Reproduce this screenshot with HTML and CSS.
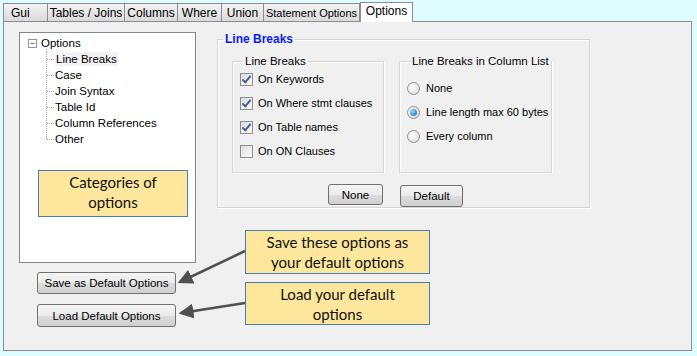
FILE: index.html
```html
<!DOCTYPE html>
<html>
  <head>
    <title>Options</title>
    <link rel="stylesheet" href="styles.css">
  </head>
  <body>
    <div class="tabs">
      <div class="tab t-gui">Gui</div>
      <div class="tab t-tables">Tables / Joins</div>
      <div class="tab t-columns">Columns</div>
      <div class="tab t-where">Where</div>
      <div class="tab t-union">Union</div>
      <div class="tab t-stmt">Statement Options</div>
      <div class="tab active">Options</div>
    </div>
    <div class="panel">
      <div class="left">
        <div class="tree">
          <div class="root"><span class="toggle">&minus;</span>Options</div>
          <ul class="children">
            <li><span class="sel">Line Breaks</span></li>
            <li>Case</li>
            <li>Join Syntax</li>
            <li>Table Id</li>
            <li>Column References</li>
            <li>Other</li>
          </ul>
          <div class="note note-cat">Categories of<br>options</div>
        </div>
        <button class="btn wide">Save as Default Options</button>
        <button class="btn wide">Load Default Options</button>
      </div>

      <fieldset class="outer">
        <legend>Line Breaks</legend>
        <div class="groups">
          <fieldset class="inner">
            <legend>Line Breaks</legend>
            <label class="opt"><span class="check on"></span>On Keywords</label>
            <label class="opt"><span class="check on"></span>On Where stmt clauses</label>
            <label class="opt"><span class="check on"></span>On Table names</label>
            <label class="opt"><span class="check"></span>On ON Clauses</label>
          </fieldset>
          <fieldset class="inner radios">
            <legend>Line Breaks in Column List</legend>
            <label class="opt"><span class="radio"></span>None</label>
            <label class="opt"><span class="radio on"></span>Line length max 60 bytes</label>
            <label class="opt"><span class="radio"></span>Every column</label>
          </fieldset>
        </div>
        <div class="actions">
          <button class="btn b-none">None</button>
          <button class="btn b-default">Default</button>
        </div>
      </fieldset>

      <div class="note note-save">Save these options as<br>your default options</div>
      <div class="note note-load">Load your default<br>options</div>
      <svg class="arrows" width="697" height="356" viewBox="0 0 697 356">
        <defs>
          <marker id="head" markerWidth="6" markerHeight="6" refX="5" refY="3" orient="auto" markerUnits="strokeWidth">
            <path d="M0,0 L6,3 L0,6 Z" fill="#505050"/>
          </marker>
        </defs>
        <line x1="245" y1="250" x2="180" y2="281" stroke="#505050" stroke-width="2.5" marker-end="url(#head)"/>
        <line x1="245" y1="302" x2="181" y2="312" stroke="#505050" stroke-width="2.5" marker-end="url(#head)"/>
      </svg>
    </div>
  </body>
</html>
```

FILE: styles.css
```css
body {
  margin: 0;
  background: #dffcff;
  font-family: "Liberation Sans", Arial, sans-serif;
  font-size: 11px;
  color: #000;
}

.tabs {
  display: flex;
  align-items: flex-end;
  height: 21px;
  padding-left: 3px;
}
.tab {
  box-sizing: border-box;
  height: 18px;
  line-height: 18px;
  padding: 0;
  border: 1px solid #898c95;
  border-bottom: none;
  margin-right: -1px;
  background: linear-gradient(#f3f3f3, #dadada);
  font-size: 12px;
  text-align: center;
  white-space: nowrap;
}
.t-gui { width: 45px; text-align: left; padding-left: 7px; }
.t-tables { width: 78px; }
.t-columns { width: 54px; }
.t-where { width: 45px; }
.t-union { width: 43px; }
.t-stmt { width: 97px; font-size: 11px; }
.tab.active {
  height: 20px;
  line-height: 17px;
  background: #fff;
  margin-left: 1px;
  width: 53px;
  position: relative;
  top: 1px;
  z-index: 1;
}

.panel {
  position: relative;
  display: flex;
  margin-left: 3px;
  width: 687px;
  height: 328px;
  background: #f0f0f0;
  border: 1px solid #898c95;
  padding: 0;
}

.left {
  display: flex;
  flex-direction: column;
  padding: 10px 0 0 15px;
}
.tree {
  position: relative;
  width: 175px;
  height: 229px;
  background: #fff;
  border: 1px solid #828790;
  padding: 0;
  font-size: 11.5px;
}
.root {
  display: flex;
  align-items: center;
  height: 16px;
  margin: 2px 0 0 8px;
}
.toggle {
  display: inline-block;
  width: 7px;
  height: 7px;
  border: 1px solid #919191;
  line-height: 6px;
  font-size: 9px;
  text-align: center;
  color: #333;
  margin-right: 4px;
}
.children {
  list-style: none;
  margin: 0 0 0 26px;
  padding: 0;
  border-left: 1px dotted #a0a0a0;
  height: 88px;
}
.children li {
  position: relative;
  height: 16px;
  line-height: 16px;
  padding-left: 8px;
}
.children li::before {
  content: "";
  position: absolute;
  left: 0;
  top: 8px;
  width: 7px;
  border-top: 1px dotted #a0a0a0;
}
.sel {
  background: #f3f3f3;
  padding: 1px 1px;
}

.note {
  position: absolute;
  background: #fde79c;
  border: 1px solid #4a7cb5;
  font-family: Lato, "Open Sans", sans-serif;
  font-size: 15px;
  line-height: 20px;
  text-align: center;
  color: #111;
  box-sizing: border-box;
  padding-top: 1px;
}
.note-cat {
  left: 18px;
  top: 137px;
  width: 150px;
  height: 47px;
}
.note-save {
  left: 241px;
  top: 208px;
  width: 185px;
  height: 44px;
}
.note-load {
  left: 241px;
  top: 260px;
  width: 185px;
  height: 43px;
}
.arrows {
  position: absolute;
  left: -4px;
  top: -21px;
  pointer-events: none;
}

.btn {
  font-family: "Liberation Sans", Arial, sans-serif;
  font-size: 11.5px;
  color: #000;
  height: 22px;
  border: 1px solid #707070;
  border-radius: 3px;
  background: linear-gradient(#f4f4f4 0%, #ebebeb 50%, #dddddd 51%, #cfcfcf 100%);
  padding: 0;
}
.wide {
  width: 139px;
  margin-left: 18px;
}
.left .wide:first-of-type {
  margin-top: 9px;
}
.left .wide + .wide {
  margin-top: 10px;
  height: 23px;
}

fieldset {
  margin: 0;
  padding: 0;
  border: 1px solid #d5d5d5;
  box-shadow: 1px 1px 0 #fff inset, 1px 1px 0 #fff;
  min-width: 0;
}
legend {
  padding: 0 2px;
  white-space: nowrap;
}
.outer {
  margin: 10px 0 0 21px;
  width: 373px;
  height: 176px;
  box-sizing: border-box;
  align-self: flex-start;
}
.outer > legend {
  margin-left: 5px;
  color: #0a1cf0;
  font-weight: bold;
  font-size: 12px;
}
.groups {
  display: flex;
  gap: 15px;
  margin: 9px 0 0 14px;
  font-size: 11px;
}
.inner {
  width: 152px;
  height: 118px;
  box-sizing: border-box;
  padding: 0 0 0 7px;
}
.inner > legend {
  margin-left: 4px;
  padding: 0 1px;
  font-size: 11.5px;
}
.radios {
  width: 153px;
  padding-top: 9px;
}
.opt {
  display: flex;
  align-items: center;
  height: 24px;
  white-space: nowrap;
}
.check {
  display: inline-block;
  flex: none;
  width: 11px;
  height: 11px;
  border: 1px solid #8e8f8f;
  background: linear-gradient(135deg, #dcdcdc, #fbfbfb);
  margin-right: 5px;
  position: relative;
}
.check.on::after {
  content: "";
  position: absolute;
  left: 3px;
  top: 0px;
  width: 3px;
  height: 7px;
  border-right: 2px solid #4a5f97;
  border-bottom: 2px solid #4a5f97;
  transform: rotate(40deg);
}
.radio {
  display: inline-block;
  flex: none;
  width: 11px;
  height: 11px;
  border: 1px solid #8e8f8f;
  border-radius: 50%;
  background: radial-gradient(circle at 40% 40%, #fff, #d8d8d8);
  margin-right: 6px;
  position: relative;
}
.radio.on::after {
  content: "";
  position: absolute;
  left: 2px;
  top: 2px;
  width: 7px;
  height: 7px;
  border-radius: 50%;
  background: radial-gradient(circle at 35% 35%, #8fd3ff, #1864b4);
}
.actions {
  display: flex;
  margin: 11px 0 0 110px;
}
.b-none {
  width: 55px;
  height: 21px;
}
.b-default {
  width: 63px;
  height: 22px;
  margin: 1px 0 0 17px;
}
```
